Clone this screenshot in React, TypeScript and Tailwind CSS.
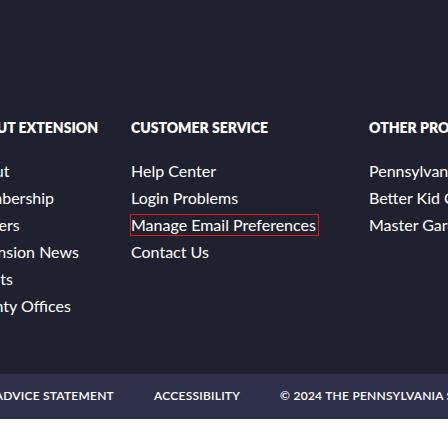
import React from 'react';

const columns = [
  {
    title: 'ABOUT EXTENSION',
    width: 'w-[165px]',
    links: ['About', 'Membership', 'Careers', 'Extension News', 'Events', 'County Offices'],
  },
  {
    title: 'CUSTOMER SERVICE',
    width: 'w-[238px]',
    links: ['Help Center', 'Login Problems', 'Manage Email Preferences', 'Contact Us'],
  },
  {
    title: 'OTHER PROGRAMS',
    width: 'w-[238px]',
    links: ['PennsylvaniaCares', 'Better Kid Care', 'Master Gardeners'],
  },
];

export default function App() {
  return (
    <div className="w-[448px] h-[448px] overflow-hidden bg-white font-['Lato','Liberation_Sans',sans-serif] text-white">
      <div className="bg-[#1f212e] pt-[118px] pb-[54px]">
        {/* colonnes du pied de page */}
        <div className="flex -ml-[34px]">
          {columns.map((col) => (
            <div key={col.title} className={`${col.width} shrink-0`}>
              <h4 className="text-[14px] leading-5 font-extrabold whitespace-nowrap">{col.title}</h4>
              <ul className="mt-[18.5px]">
                {col.links.map((l) => (
                  <li key={l} className="h-[27.2px] leading-[27px] text-[16px] whitespace-nowrap">
                    {l === 'Manage Email Preferences' ? (
                      <a className="outline outline-1 outline-[#e3141b] pr-[2px] leading-5 inline-block">{l}</a>
                    ) : (
                      <a>{l}</a>
                    )}
                  </li>
                ))}
              </ul>
            </div>
          ))}
        </div>
      </div>
      <div className="bg-[#2d3048] h-[45px] flex items-center gap-10 text-[12px] font-semibold tracking-[0.02em] whitespace-nowrap">
        <div className="w-[114px] shrink-0 flex justify-end">
          <span>MEDICAL ADVICE STATEMENT</span>
        </div>
        <span>ACCESSIBILITY</span>
        <span>© 2024 THE PENNSYLVANIA STATE UNIVERSITY</span>
      </div>
    </div>
  );
}
